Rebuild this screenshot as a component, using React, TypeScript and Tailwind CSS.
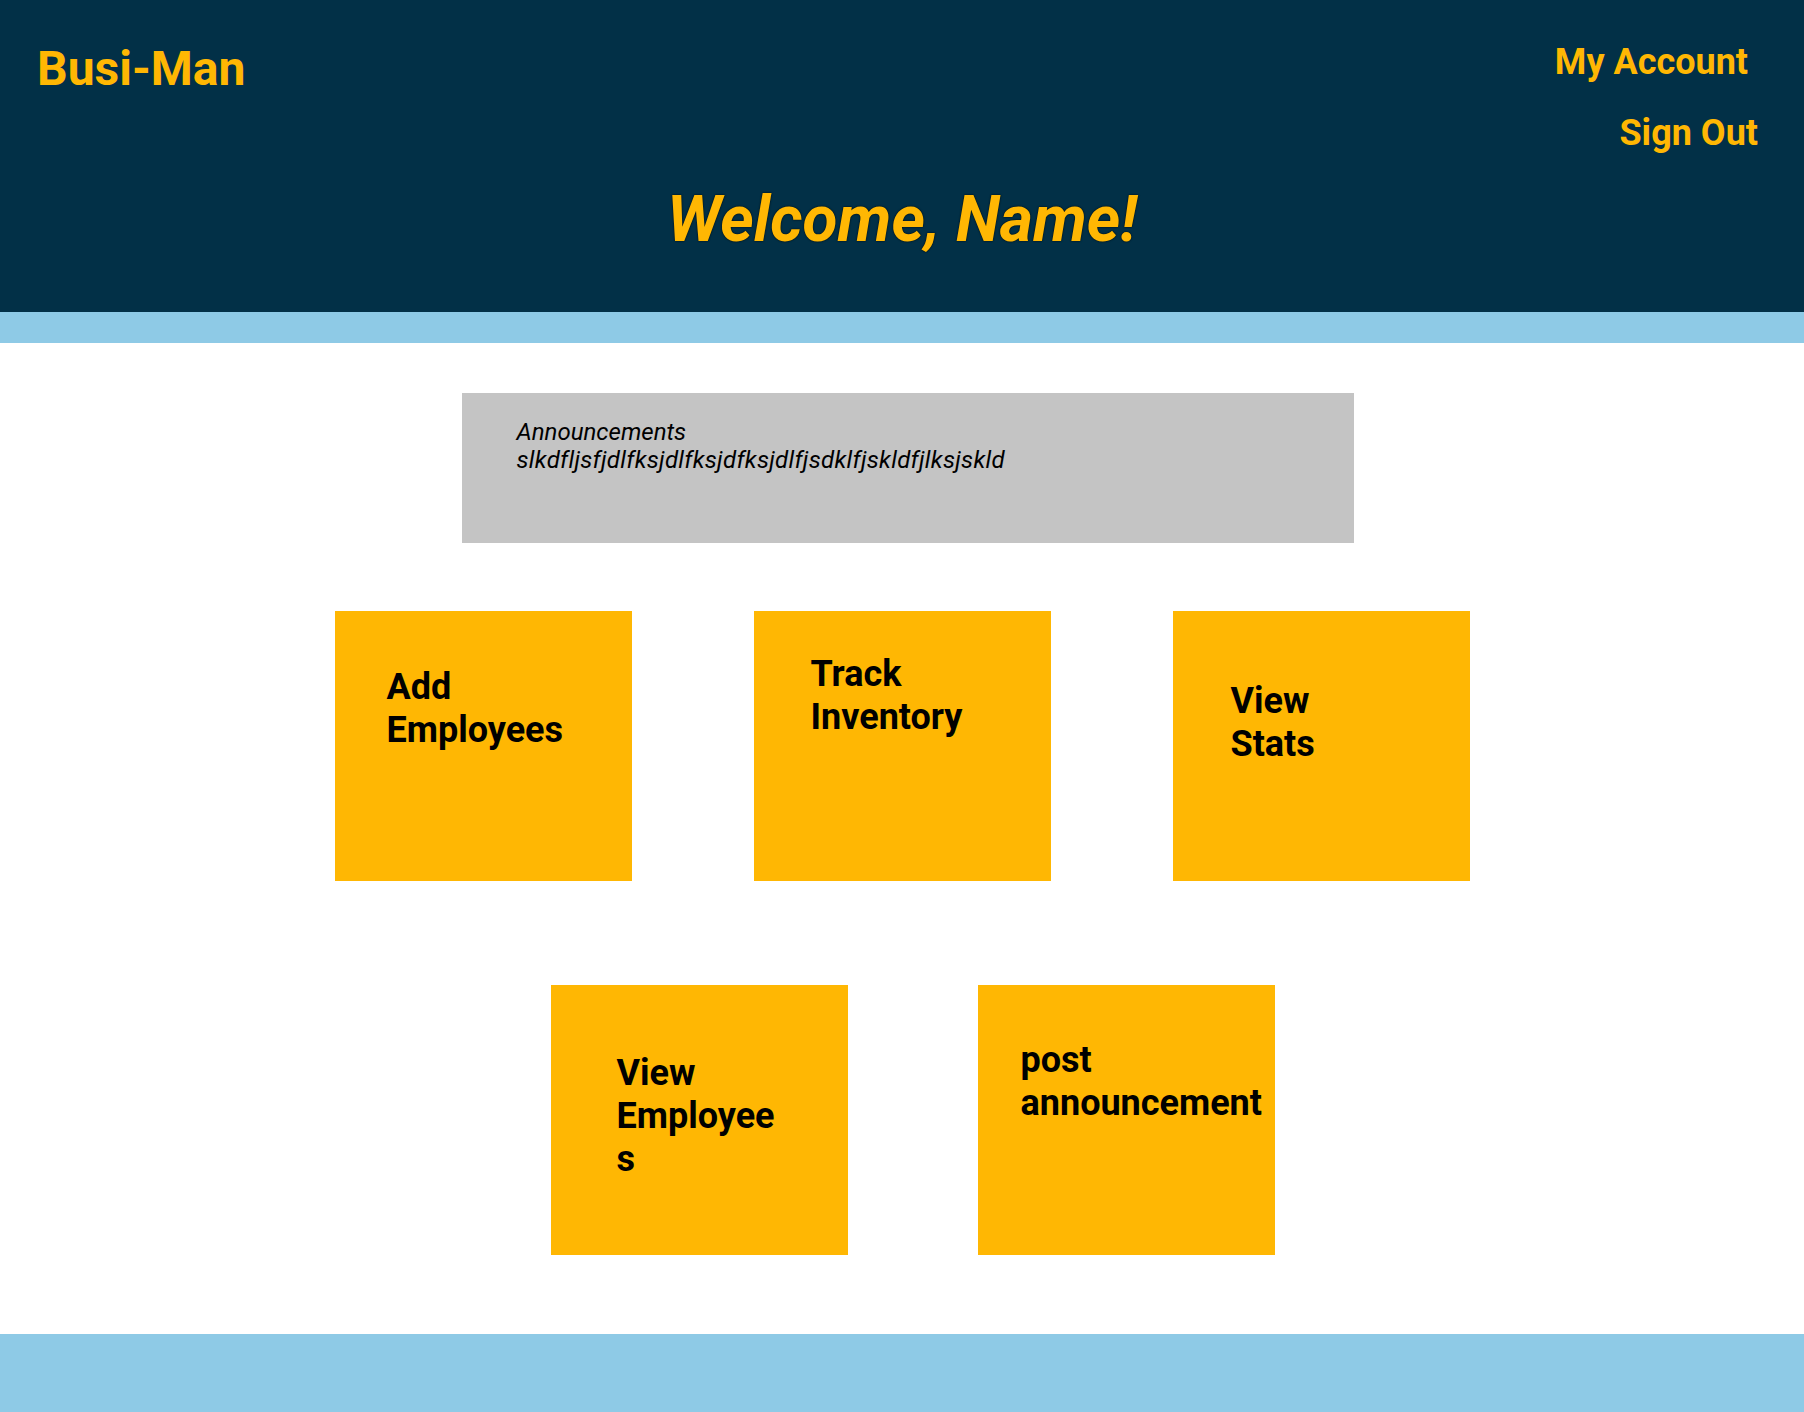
const CARDS_TOP = [
  { label: 'Add Employees', pad: 'pl-[52px] pt-[55px]', text: 'w-[200px]' },
  { label: 'Track Inventory', pad: 'pl-[57px] pt-[42px]', text: 'w-[200px]' },
  { label: 'View Stats', pad: 'pl-[58px] pt-[69px]', text: 'w-[120px]' },
]

const CARDS_BOTTOM = [
  { label: 'View Employees', pad: 'pl-[66px] pt-[67px]', text: 'w-[165px]' },
  { label: 'post announcement', pad: 'pl-[43px] pt-[54px]', text: 'w-[245px]' },
]

function Card({ label, pad, text }: { label: string; pad: string; text: string }) {
  return (
    <button className={`bg-[#FFB703] w-[297px] h-[270px] flex items-start text-left ${pad}`}>
      <span className={`text-black font-bold text-[36px] leading-[1.2] break-words ${text}`}>
        {label}
      </span>
    </button>
  )
}

export default function App() {
  return (
    <div className="min-h-[1412px] flex flex-col bg-white font-['Roboto',sans-serif]">
      {/* Header */}
      <header className="bg-[#023047] h-[312px] flex flex-col">
        <div className="flex justify-between">
          <h1 className="ml-[37px] mt-[45px] text-[#FFB703] text-[48px] leading-none font-bold">
            Busi-Man
          </h1>
          <nav className="flex flex-col items-end text-[#FFB703] text-[36px] leading-none font-bold">
            <a href="#" className="mt-[44px] mr-[56px]">
              My Account
            </a>
            <a href="#" className="mt-[35px] mr-[46px]">
              Sign Out
            </a>
          </nav>
        </div>
        <h2 className="mt-[37px] text-center text-[#FFB703] text-[64px] leading-none font-bold italic [text-shadow:0_0_2px_#000]">
          Welcome, Name!
        </h2>
      </header>
      <div className="bg-[#8ECAE6] h-[31px]" />

      {/* Main */}
      <main className="flex-1 flex flex-col items-center">
        <section className="mt-[50px] ml-[11px] w-[892px] h-[150px] bg-[#C4C4C4] pl-[55px] pt-[25px] text-black italic text-[24px] leading-[28px]">
          <p>Announcements</p>
          <p className="tracking-[0.3px]">slkdfljsfjdlfksjdlfksjdfksjdlfjsdklfjskldfjlksjskld</p>
        </section>

        <div className="mt-[68px] flex gap-[122px]">
          {CARDS_TOP.map((c) => (
            <Card key={c.label} {...c} />
          ))}
        </div>

        <div className="mt-[104px] flex gap-[130px] pl-[21px]">
          {CARDS_BOTTOM.map((c) => (
            <Card key={c.label} {...c} />
          ))}
        </div>
      </main>

      <footer className="bg-[#8ECAE6] h-[78px]" />
    </div>
  )
}
